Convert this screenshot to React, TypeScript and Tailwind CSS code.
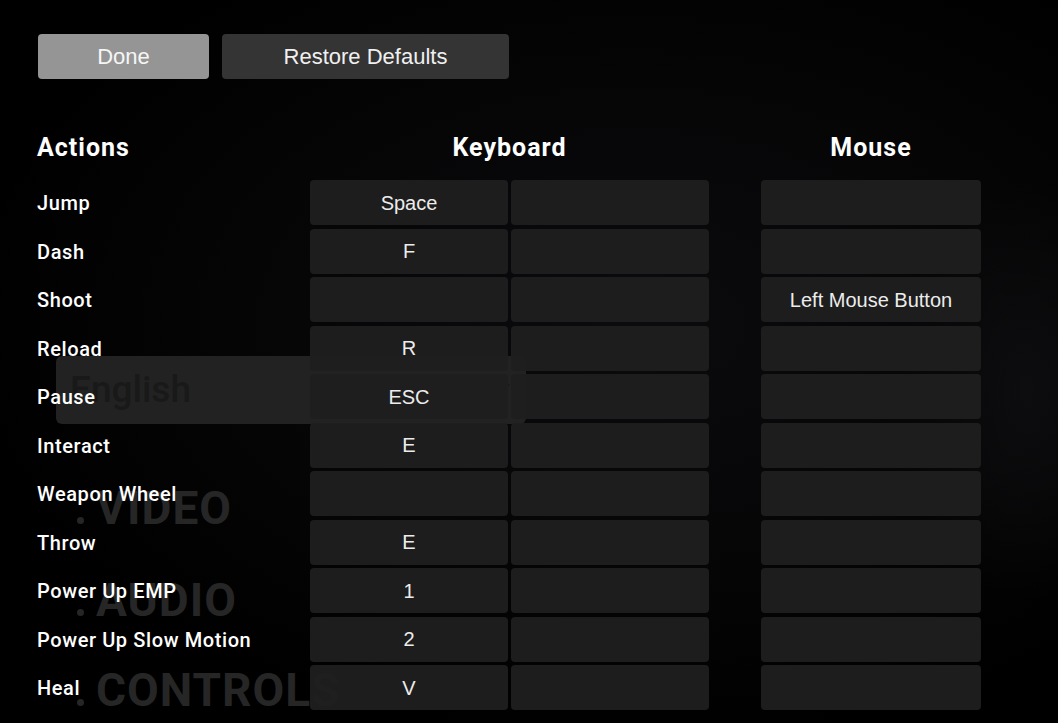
import React from 'react';

type Binding = {
  action: string;
  primary: string;
  secondary: string;
  mouse: string;
};

const bindings: Binding[] = [
  { action: 'Jump', primary: 'Space', secondary: '', mouse: '' },
  { action: 'Dash', primary: 'F', secondary: '', mouse: '' },
  { action: 'Shoot', primary: '', secondary: '', mouse: 'Left Mouse Button' },
  { action: 'Reload', primary: 'R', secondary: '', mouse: '' },
  { action: 'Pause', primary: 'ESC', secondary: '', mouse: '' },
  { action: 'Interact', primary: 'E', secondary: '', mouse: '' },
  { action: 'Weapon Wheel', primary: '', secondary: '', mouse: '' },
  { action: 'Throw', primary: 'E', secondary: '', mouse: '' },
  { action: 'Power Up EMP', primary: '1', secondary: '', mouse: '' },
  { action: 'Power Up Slow Motion', primary: '2', secondary: '', mouse: '' },
  { action: 'Heal', primary: 'V', secondary: '', mouse: '' }
];

const din = { fontFamily: 'Roboto, "DejaVu Sans", sans-serif' };
const arial = { fontFamily: '"Liberation Sans", Arial, sans-serif' };

const KeyCell = ({ label, width }: { label: string; width: string }) => (
  <div
    className={`flex h-[45px] ${width} items-center justify-center rounded-[4px] bg-[#1f1f1f]/95 text-[20px] text-[#ececec]`}
    style={arial}
  >
    {label}
  </div>
);

// faded main menu that sits behind the controls panel
const MenuBackdrop = () => (
  <div className="pointer-events-none absolute inset-0" style={din}>
    <div className="absolute inset-0 bg-[radial-gradient(ellipse_at_60%_45%,#0b0b0e_0%,#050506_45%,#000_75%)]" />
    <div className="absolute right-0 top-[180px] h-[420px] w-[160px] bg-[radial-gradient(ellipse_at_80%_50%,#0d0d0f_0%,transparent_70%)]" />
    <div className="absolute left-[56px] top-[356px] flex h-[68px] w-[470px] items-center rounded-[6px] bg-[#222222] pl-[14px]">
      <span className="text-[37px] font-medium text-[#191919]">English</span>
      <svg className="absolute right-[16px] top-[26px]" width="14" height="10" viewBox="0 0 14 10">
        <path d="M1 2 L7 8 L13 2" fill="none" stroke="#191919" strokeWidth="2" />
      </svg>
    </div>
    {[
      { label: 'VIDEO', top: 'top-[485px]' },
      { label: 'AUDIO', top: 'top-[577px]' },
      { label: 'CONTROLS', top: 'top-[667px]' }
    ].map((item) => (
      <div key={item.label} className={`absolute left-[77px] ${item.top} flex items-end gap-[12px]`}>
        <span className="mb-[7px] h-[7px] w-[7px] rounded-full bg-[#262626]" />
        <span className="text-[46px] font-bold leading-none tracking-[1px] text-[#262626]">{item.label}</span>
      </div>
    ))}
  </div>
);

export default function App() {
  return (
    <div className="relative h-[723px] w-full overflow-hidden bg-black">
      <MenuBackdrop />

      <div className="relative pl-[37px] pt-[34px]">
        <div className="ml-px flex gap-[13px]" style={arial}>
          <button className="h-[45px] w-[171px] rounded-[4px] bg-[#959595] text-[22px] text-[#f6f6f6]">
            Done
          </button>
          <button className="h-[45px] w-[287px] rounded-[4px] bg-[#343434] text-[22px] text-[#f0f0f0]">
            Restore Defaults
          </button>
        </div>

        <div
          className="mt-[54px] flex h-[30px] items-center text-[25px] font-bold tracking-[1px] text-white"
          style={din}
        >
          <div className="w-[273px]">Actions</div>
          <div className="w-[399px] text-center">Keyboard</div>
          <div className="w-[52px]" />
          <div className="w-[220px] text-center">Mouse</div>
        </div>

        <div className="mt-[17px] flex flex-col gap-[3.5px]">
          {bindings.map((row) => (
            <div key={row.action} className="flex items-center">
              <div className="w-[273px] pt-px text-[20px] font-medium tracking-[0.6px] text-white" style={din}>
                {row.action}
              </div>
              <KeyCell label={row.primary} width="w-[198px]" />
              <div className="w-[3px]" />
              <KeyCell label={row.secondary} width="w-[198px]" />
              <div className="w-[52px]" />
              <KeyCell label={row.mouse} width="w-[220px]" />
            </div>
          ))}
        </div>
      </div>
    </div>
  );
}
